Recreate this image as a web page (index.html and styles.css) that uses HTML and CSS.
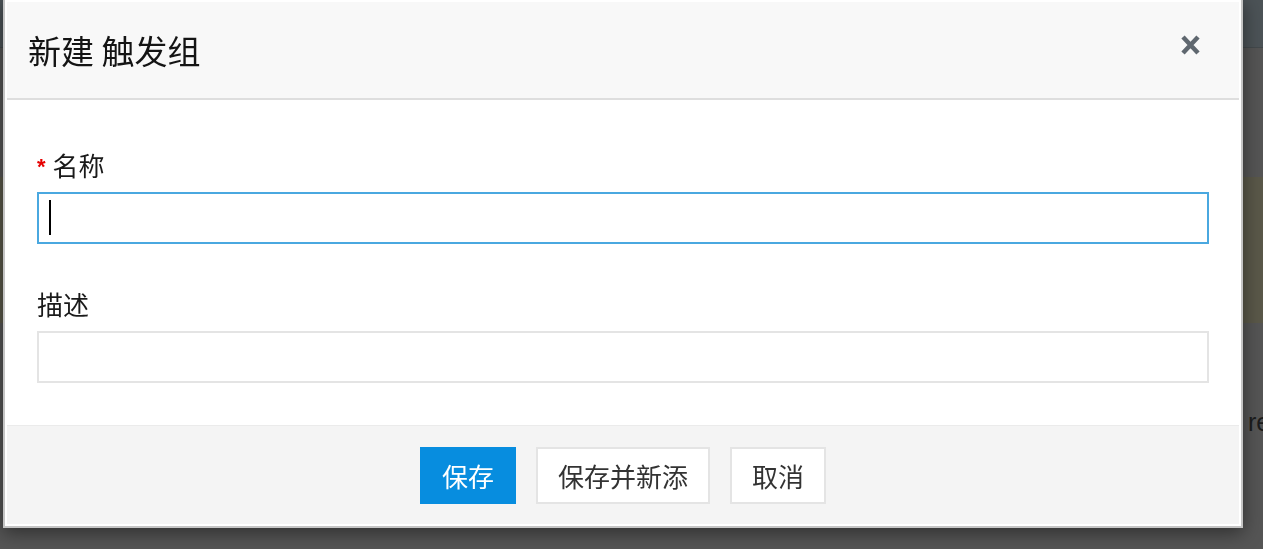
FILE: index.html
```html
<!DOCTYPE html>
<html lang="zh-CN">
<head>
    <meta charset="UTF-8">
    <meta name="viewport" content="width=device-width, initial-scale=1.0">
    <title>新建 触发组</title>
    <link rel="stylesheet" href="styles.css">
</head>
<body>
<div class="page">
    <div class="topbar"></div>
    <div class="notice"></div>
    <div class="page-text">re</div>
</div>

<div class="modal">
    <div class="modal-header">
        <h4 class="modal-title">新建 触发组</h4>
        <button class="close" type="button">
            <svg width="21" height="20" viewBox="0 0 21 20">
                <path d="M3 2 L18 18 M18 2 L3 18" stroke="#5f676f" stroke-width="4.5" fill="none"/>
            </svg>
        </button>
    </div>
    <div class="modal-body">
        <div class="form-group">
            <label class="required"><span class="star">*</span>名称</label>
            <div class="field">
                <input class="form-control focus" type="text">
                <span class="caret"></span>
            </div>
        </div>
        <div class="form-group">
            <label>描述</label>
            <div class="field">
                <input class="form-control" type="text">
            </div>
        </div>
    </div>
    <div class="modal-footer">
        <button class="btn btn-primary" type="button">保存</button>
        <button class="btn" type="button">保存并新添</button>
        <button class="btn" type="button">取消</button>
    </div>
</div>
</body>
</html>
```

FILE: styles.css
```css
body {
    margin: 0;
    background-color: #555555;
    font-family: "Noto Sans CJK SC", "Liberation Sans", sans-serif;
    overflow: hidden;
}

.page {
    height: 549px;
}
.topbar {
    height: 47px;
    background-color: #4c5357;
    border-bottom: 1px solid #43494c;
}
.notice {
    margin-top: 129px;
    height: 146px;
    background-color: #5a5849;
}
.page-text {
    margin-top: 84px;
    padding-left: 1248px;
    font-size: 25px;
    line-height: 30px;
    color: #1c1c1c;
    font-family: "Liberation Sans", sans-serif;
}

.modal {
    position: fixed;
    top: -2px;
    left: 3px;
    width: 1240px;
    box-sizing: border-box;
    border: 2px solid #c4c4c4;
    padding: 2px;
    background-color: #fff;
    box-shadow: 0 5px 18px rgba(0, 0, 0, 0.45);
}

.modal-header {
    height: 96px;
    background-color: #f8f8f8;
    border-bottom: 2px solid #dedede;
    display: flex;
    align-items: center;
    justify-content: space-between;
    padding: 0 38px 0 21px;
}
.modal-title {
    margin: 0;
    font-size: 33px;
    font-weight: normal;
    color: #141414;
    line-height: 40px;
}
.close {
    align-self: flex-start;
    margin-top: 33px;
    padding: 0;
    border: none;
    background: none;
    width: 21px;
    height: 20px;
    display: block;
}
.close svg {
    display: block;
}

.modal-body {
    padding: 45px 30px 42px 30px;
}
.form-group {
    margin-bottom: 40px;
}
.form-group:last-child {
    margin-bottom: 0;
}
.form-group label {
    display: flex;
    align-items: center;
    height: 39px;
    font-size: 26px;
    line-height: 39px;
    color: #1a1a1a;
    margin-bottom: 8px;
}
.star {
    color: #e60000;
    font-family: "Liberation Sans", sans-serif;
    font-size: 22px;
    line-height: 1;
    font-weight: bold;
    margin-right: 7px;
    padding-top: 4px;
}
.field {
    position: relative;
}
.form-control {
    display: block;
    width: 100%;
    height: 52px;
    box-sizing: border-box;
    border: 2px solid #e4e4e4;
    background-color: #fff;
    padding: 0 10px;
    font-size: 26px;
    outline: none;
    caret-color: transparent;
}
.form-control.focus {
    border-color: #4aa8e0;
}
.caret {
    position: absolute;
    left: 12px;
    top: 8px;
    width: 2px;
    height: 35px;
    background-color: #000;
}

.modal-footer {
    background-color: #f4f4f4;
    border-top: 1px solid #ebebeb;
    padding: 21px 0 20px;
    display: flex;
    justify-content: center;
    gap: 20px;
}
.btn {
    height: 57px;
    padding: 0 20px;
    border: 2px solid #e4e4e4;
    background-color: #fff;
    color: #333;
    font-family: "Noto Sans CJK SC", "Liberation Sans", sans-serif;
    font-size: 26px;
    line-height: 53px;
}
.btn-primary {
    background-color: #078ddf;
    border-color: #078ddf;
    color: #fff;
}
```
